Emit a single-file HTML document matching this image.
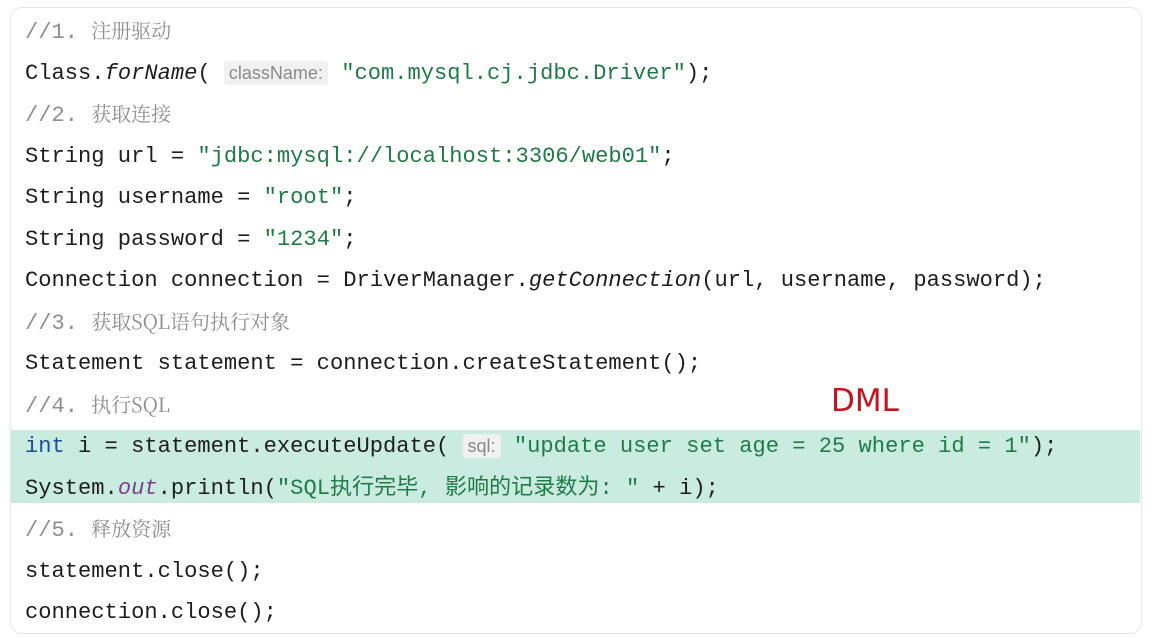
<html><head><style>
body{margin:0;width:1152px;height:638px;background:#fff;overflow:hidden;position:relative;font-family:"Liberation Mono","Noto Sans CJK SC",monospace;}
.card{position:absolute;left:10px;top:7px;width:1130px;height:625px;border:1px solid #e6e6e6;border-radius:12px;background:#fff;}
.hl{position:absolute;left:11px;top:430px;width:1129px;height:73px;background:#c9ebe0;}
.code{position:absolute;left:25px;top:11px;font-size:22.1px;color:#1e1e1e;}
.code div{height:41.5px;line-height:41.5px;white-space:pre;}
.c{color:#8f8f8f;position:relative;top:-2px}.c span{font-family:"Noto Serif CJK SC",serif;font-size:20px;}
.s{color:#1f7c48}.k{color:#1a4f9e}.i{font-style:italic}.o{font-style:italic;color:#7a3e8e}
.h{font-family:"Liberation Sans","Noto Sans CJK SC",sans-serif;font-size:18px;line-height:20px;color:#8a8a8a;background:#f1f1f1;padding:2px 5px;border-radius:3px;display:inline-block;}
.dml{position:absolute;left:831px;top:383px;font-family:"DejaVu Sans",sans-serif;font-size:31px;color:#c8121c;}
</style></head><body>
<div class="card"></div>
<div class="hl"></div>
<div class="dml">DML</div>
<div class="code"><div><span class="c">//1. <span>注册驱动</span></span></div><div>Class.<span class="i">forName</span>( <span class="h">className:</span> <span class="s">"com.mysql.cj.jdbc.Driver"</span>);</div><div><span class="c">//2. <span>获取连接</span></span></div><div>String url = <span class="s">"jdbc:mysql://localhost:3306/web01"</span>;</div><div>String username = <span class="s">"root"</span>;</div><div>String password = <span class="s">"1234"</span>;</div><div>Connection connection = DriverManager.<span class="i">getConnection</span>(url, username, password);</div><div><span class="c">//3. <span>获取SQL语句执行对象</span></span></div><div>Statement statement = connection.createStatement();</div><div><span class="c">//4. <span>执行SQL</span></span></div><div><span class="k">int</span> i = statement.executeUpdate( <span class="h">sql:</span> <span class="s">"update user set age = 25 where id = 1"</span>);</div><div>System.<span class="o">out</span>.println(<span class="s">"SQL执行完毕, 影响的记录数为: "</span> + i);</div><div><span class="c">//5. <span>释放资源</span></span></div><div>statement.close();</div><div>connection.close();</div></div>
</body></html>
